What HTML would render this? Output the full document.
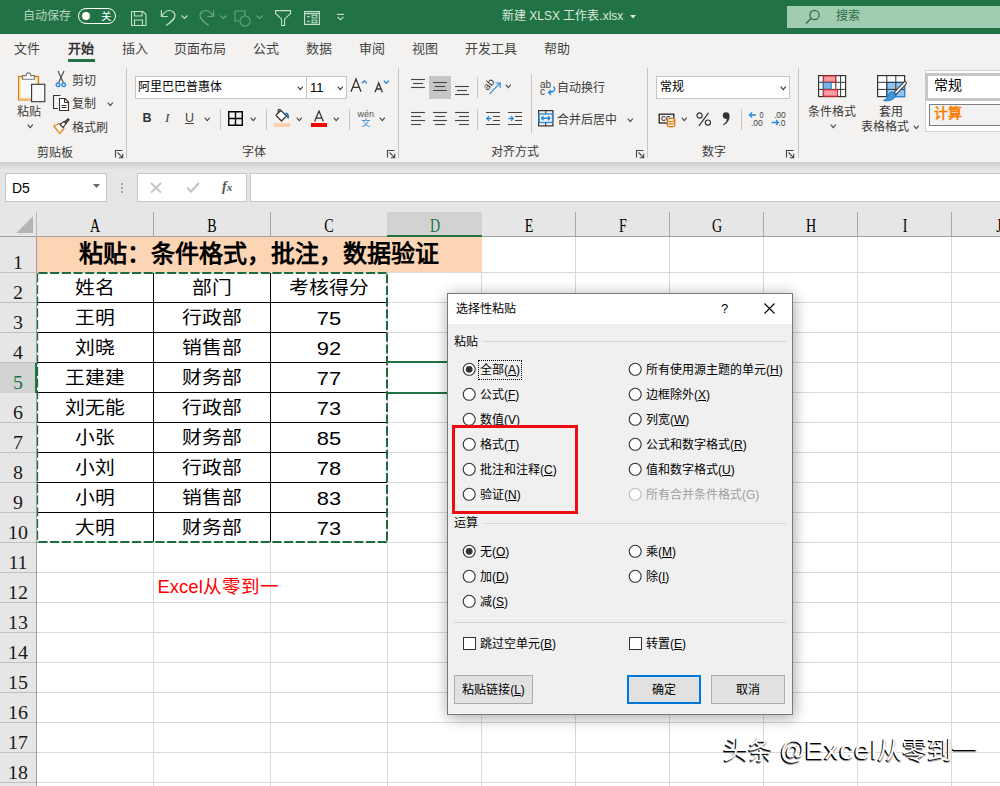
<!DOCTYPE html><html lang="zh-CN"><head><meta charset="utf-8"><style>
html,body{margin:0;padding:0}
body{width:1000px;height:786px;overflow:hidden;position:relative;background:#fff;font-family:"Liberation Sans",sans-serif}
div{box-sizing:border-box}
svg{overflow:visible}
</style></head><body>
<div style="position:absolute;left:153px;top:237px;width:1px;height:549px;background:#d9d9d9"></div>
<div style="position:absolute;left:270px;top:237px;width:1px;height:549px;background:#d9d9d9"></div>
<div style="position:absolute;left:387px;top:237px;width:1px;height:549px;background:#d9d9d9"></div>
<div style="position:absolute;left:481px;top:237px;width:1px;height:549px;background:#d9d9d9"></div>
<div style="position:absolute;left:575px;top:237px;width:1px;height:549px;background:#d9d9d9"></div>
<div style="position:absolute;left:669px;top:237px;width:1px;height:549px;background:#d9d9d9"></div>
<div style="position:absolute;left:763px;top:237px;width:1px;height:549px;background:#d9d9d9"></div>
<div style="position:absolute;left:857px;top:237px;width:1px;height:549px;background:#d9d9d9"></div>
<div style="position:absolute;left:951px;top:237px;width:1px;height:549px;background:#d9d9d9"></div>
<div style="position:absolute;left:1045px;top:237px;width:1px;height:549px;background:#d9d9d9"></div>
<div style="position:absolute;left:37px;top:272px;width:963px;height:1px;background:#d9d9d9"></div>
<div style="position:absolute;left:37px;top:302px;width:963px;height:1px;background:#d9d9d9"></div>
<div style="position:absolute;left:37px;top:332px;width:963px;height:1px;background:#d9d9d9"></div>
<div style="position:absolute;left:37px;top:362px;width:963px;height:1px;background:#d9d9d9"></div>
<div style="position:absolute;left:37px;top:392px;width:963px;height:1px;background:#d9d9d9"></div>
<div style="position:absolute;left:37px;top:422px;width:963px;height:1px;background:#d9d9d9"></div>
<div style="position:absolute;left:37px;top:452px;width:963px;height:1px;background:#d9d9d9"></div>
<div style="position:absolute;left:37px;top:482px;width:963px;height:1px;background:#d9d9d9"></div>
<div style="position:absolute;left:37px;top:512px;width:963px;height:1px;background:#d9d9d9"></div>
<div style="position:absolute;left:37px;top:542px;width:963px;height:1px;background:#d9d9d9"></div>
<div style="position:absolute;left:37px;top:572px;width:963px;height:1px;background:#d9d9d9"></div>
<div style="position:absolute;left:37px;top:602px;width:963px;height:1px;background:#d9d9d9"></div>
<div style="position:absolute;left:37px;top:632px;width:963px;height:1px;background:#d9d9d9"></div>
<div style="position:absolute;left:37px;top:662px;width:963px;height:1px;background:#d9d9d9"></div>
<div style="position:absolute;left:37px;top:692px;width:963px;height:1px;background:#d9d9d9"></div>
<div style="position:absolute;left:37px;top:722px;width:963px;height:1px;background:#d9d9d9"></div>
<div style="position:absolute;left:37px;top:752px;width:963px;height:1px;background:#d9d9d9"></div>
<div style="position:absolute;left:37px;top:782px;width:963px;height:1px;background:#d9d9d9"></div>
<div style="position:absolute;left:37px;top:237px;width:445px;height:35px;background:#fcd5b4"></div>
<div style="position:absolute;left:39.0px;top:239.0px;width:440px;height:30px;line-height:30px;text-align:center;font-size:24px;color:#000;white-space:nowrap;font-weight:bold">粘贴：条件格式，批注，数据验证</div>
<div style="position:absolute;left:37px;top:302px;width:350px;height:1px;background:#000"></div>
<div style="position:absolute;left:37px;top:332px;width:350px;height:1px;background:#000"></div>
<div style="position:absolute;left:37px;top:362px;width:350px;height:1px;background:#000"></div>
<div style="position:absolute;left:37px;top:392px;width:350px;height:1px;background:#000"></div>
<div style="position:absolute;left:37px;top:422px;width:350px;height:1px;background:#000"></div>
<div style="position:absolute;left:37px;top:452px;width:350px;height:1px;background:#000"></div>
<div style="position:absolute;left:37px;top:482px;width:350px;height:1px;background:#000"></div>
<div style="position:absolute;left:37px;top:512px;width:350px;height:1px;background:#000"></div>
<div style="position:absolute;left:153px;top:273px;width:1px;height:269px;background:#000"></div>
<div style="position:absolute;left:270px;top:273px;width:1px;height:269px;background:#000"></div>
<div style="position:absolute;left:37.0px;top:276.0px;width:116px;height:24px;line-height:24px;text-align:center;font-size:18px;color:#000;white-space:nowrap;transform:scaleX(1.1)">姓名</div>
<div style="position:absolute;left:154.0px;top:276.0px;width:116px;height:24px;line-height:24px;text-align:center;font-size:18px;color:#000;white-space:nowrap;transform:scaleX(1.1)">部门</div>
<div style="position:absolute;left:271.0px;top:276.0px;width:116px;height:24px;line-height:24px;text-align:center;font-size:18px;color:#000;white-space:nowrap;transform:scaleX(1.1)">考核得分</div>
<div style="position:absolute;left:37.0px;top:306.0px;width:116px;height:24px;line-height:24px;text-align:center;font-size:18px;color:#000;white-space:nowrap;transform:scaleX(1.1)">王明</div>
<div style="position:absolute;left:154.0px;top:306.0px;width:116px;height:24px;line-height:24px;text-align:center;font-size:18px;color:#000;white-space:nowrap;transform:scaleX(1.1)">行政部</div>
<div style="position:absolute;left:271.0px;top:305.5px;width:116px;height:25px;line-height:25px;text-align:center;font-size:19px;color:#000;white-space:nowrap;transform:scaleX(1.15)">75</div>
<div style="position:absolute;left:37.0px;top:336.0px;width:116px;height:24px;line-height:24px;text-align:center;font-size:18px;color:#000;white-space:nowrap;transform:scaleX(1.1)">刘晓</div>
<div style="position:absolute;left:154.0px;top:336.0px;width:116px;height:24px;line-height:24px;text-align:center;font-size:18px;color:#000;white-space:nowrap;transform:scaleX(1.1)">销售部</div>
<div style="position:absolute;left:271.0px;top:335.5px;width:116px;height:25px;line-height:25px;text-align:center;font-size:19px;color:#000;white-space:nowrap;transform:scaleX(1.15)">92</div>
<div style="position:absolute;left:37.0px;top:366.0px;width:116px;height:24px;line-height:24px;text-align:center;font-size:18px;color:#000;white-space:nowrap;transform:scaleX(1.1)">王建建</div>
<div style="position:absolute;left:154.0px;top:366.0px;width:116px;height:24px;line-height:24px;text-align:center;font-size:18px;color:#000;white-space:nowrap;transform:scaleX(1.1)">财务部</div>
<div style="position:absolute;left:271.0px;top:365.5px;width:116px;height:25px;line-height:25px;text-align:center;font-size:19px;color:#000;white-space:nowrap;transform:scaleX(1.15)">77</div>
<div style="position:absolute;left:37.0px;top:396.0px;width:116px;height:24px;line-height:24px;text-align:center;font-size:18px;color:#000;white-space:nowrap;transform:scaleX(1.1)">刘无能</div>
<div style="position:absolute;left:154.0px;top:396.0px;width:116px;height:24px;line-height:24px;text-align:center;font-size:18px;color:#000;white-space:nowrap;transform:scaleX(1.1)">行政部</div>
<div style="position:absolute;left:271.0px;top:395.5px;width:116px;height:25px;line-height:25px;text-align:center;font-size:19px;color:#000;white-space:nowrap;transform:scaleX(1.15)">73</div>
<div style="position:absolute;left:37.0px;top:426.0px;width:116px;height:24px;line-height:24px;text-align:center;font-size:18px;color:#000;white-space:nowrap;transform:scaleX(1.1)">小张</div>
<div style="position:absolute;left:154.0px;top:426.0px;width:116px;height:24px;line-height:24px;text-align:center;font-size:18px;color:#000;white-space:nowrap;transform:scaleX(1.1)">财务部</div>
<div style="position:absolute;left:271.0px;top:425.5px;width:116px;height:25px;line-height:25px;text-align:center;font-size:19px;color:#000;white-space:nowrap;transform:scaleX(1.15)">85</div>
<div style="position:absolute;left:37.0px;top:456.0px;width:116px;height:24px;line-height:24px;text-align:center;font-size:18px;color:#000;white-space:nowrap;transform:scaleX(1.1)">小刘</div>
<div style="position:absolute;left:154.0px;top:456.0px;width:116px;height:24px;line-height:24px;text-align:center;font-size:18px;color:#000;white-space:nowrap;transform:scaleX(1.1)">行政部</div>
<div style="position:absolute;left:271.0px;top:455.5px;width:116px;height:25px;line-height:25px;text-align:center;font-size:19px;color:#000;white-space:nowrap;transform:scaleX(1.15)">78</div>
<div style="position:absolute;left:37.0px;top:486.0px;width:116px;height:24px;line-height:24px;text-align:center;font-size:18px;color:#000;white-space:nowrap;transform:scaleX(1.1)">小明</div>
<div style="position:absolute;left:154.0px;top:486.0px;width:116px;height:24px;line-height:24px;text-align:center;font-size:18px;color:#000;white-space:nowrap;transform:scaleX(1.1)">销售部</div>
<div style="position:absolute;left:271.0px;top:485.5px;width:116px;height:25px;line-height:25px;text-align:center;font-size:19px;color:#000;white-space:nowrap;transform:scaleX(1.15)">83</div>
<div style="position:absolute;left:37.0px;top:516.0px;width:116px;height:24px;line-height:24px;text-align:center;font-size:18px;color:#000;white-space:nowrap;transform:scaleX(1.1)">大明</div>
<div style="position:absolute;left:154.0px;top:516.0px;width:116px;height:24px;line-height:24px;text-align:center;font-size:18px;color:#000;white-space:nowrap;transform:scaleX(1.1)">财务部</div>
<div style="position:absolute;left:271.0px;top:515.5px;width:116px;height:25px;line-height:25px;text-align:center;font-size:19px;color:#000;white-space:nowrap;transform:scaleX(1.15)">73</div>
<svg style="position:absolute;left:0px;top:0px;pointer-events:none" width="400" height="560" viewBox="0 0 400 560"><path d="M38.4 273 H386.5" stroke="#1e6b3f" stroke-width="2" stroke-dasharray="9.1 2.6" fill="none"/><path d="M38.4 542 H388" stroke="#1e6b3f" stroke-width="2" stroke-dasharray="9.1 2.6" fill="none"/><path d="M37.5 273.2 V543" stroke="#1e6b3f" stroke-width="1.3" stroke-dasharray="9.1 2.6" fill="none"/><path d="M387 274.2 V543" stroke="#1e6b3f" stroke-width="2" stroke-dasharray="9.1 2.6" fill="none"/></svg>
<div style="position:absolute;left:388px;top:361px;width:94px;height:2px;background:#217346"></div>
<div style="position:absolute;left:388px;top:392px;width:94px;height:2px;background:#217346"></div>
<div style="position:absolute;left:157.5px;top:574.75px;height:24.5px;line-height:24.5px;font-size:18.5px;color:#ff0000;white-space:nowrap;">Excel从零到一</div>
<div style="position:absolute;left:0px;top:212px;width:1000px;height:25px;background:#e6e6e6"></div>
<div style="position:absolute;left:0px;top:236px;width:1000px;height:1px;background:#9e9e9e"></div>
<svg style="position:absolute;left:0px;top:212px;" width="36" height="25" viewBox="0 0 36 25"><path d="M16.3 21 L33 4.3 L33 21 Z" fill="#b4b4b4"/></svg>
<div style="position:absolute;left:153px;top:212px;width:1px;height:24px;background:#a8a8a8"></div>
<div style="position:absolute;left:270px;top:212px;width:1px;height:24px;background:#a8a8a8"></div>
<div style="position:absolute;left:387px;top:212px;width:1px;height:24px;background:#a8a8a8"></div>
<div style="position:absolute;left:481px;top:212px;width:1px;height:24px;background:#a8a8a8"></div>
<div style="position:absolute;left:575px;top:212px;width:1px;height:24px;background:#a8a8a8"></div>
<div style="position:absolute;left:669px;top:212px;width:1px;height:24px;background:#a8a8a8"></div>
<div style="position:absolute;left:763px;top:212px;width:1px;height:24px;background:#a8a8a8"></div>
<div style="position:absolute;left:857px;top:212px;width:1px;height:24px;background:#a8a8a8"></div>
<div style="position:absolute;left:951px;top:212px;width:1px;height:24px;background:#a8a8a8"></div>
<div style="position:absolute;left:1045px;top:212px;width:1px;height:24px;background:#a8a8a8"></div>
<div style="position:absolute;left:36px;top:212px;width:1px;height:25px;background:#b8b8b8"></div>
<div style="position:absolute;left:387px;top:212px;width:95px;height:25px;background:#d2d2d2"></div>
<div style="position:absolute;left:387px;top:235px;width:95px;height:2px;background:#217346"></div>
<div style="position:absolute;left:75.0px;top:213.0px;width:40px;height:24px;line-height:24px;text-align:center;font-size:18px;color:#000;white-space:nowrap;font-family:'Liberation Serif',serif;transform:translateY(1px) scaleX(0.78)">A</div>
<div style="position:absolute;left:192.0px;top:213.0px;width:40px;height:24px;line-height:24px;text-align:center;font-size:18px;color:#000;white-space:nowrap;font-family:'Liberation Serif',serif;transform:translateY(1px) scaleX(0.78)">B</div>
<div style="position:absolute;left:309.0px;top:213.0px;width:40px;height:24px;line-height:24px;text-align:center;font-size:18px;color:#000;white-space:nowrap;font-family:'Liberation Serif',serif;transform:translateY(1px) scaleX(0.78)">C</div>
<div style="position:absolute;left:414.5px;top:213.0px;width:40px;height:24px;line-height:24px;text-align:center;font-size:18px;color:#217346;white-space:nowrap;font-family:'Liberation Serif',serif;transform:translateY(1px) scaleX(0.78)">D</div>
<div style="position:absolute;left:508.5px;top:213.0px;width:40px;height:24px;line-height:24px;text-align:center;font-size:18px;color:#000;white-space:nowrap;font-family:'Liberation Serif',serif;transform:translateY(1px) scaleX(0.78)">E</div>
<div style="position:absolute;left:602.5px;top:213.0px;width:40px;height:24px;line-height:24px;text-align:center;font-size:18px;color:#000;white-space:nowrap;font-family:'Liberation Serif',serif;transform:translateY(1px) scaleX(0.78)">F</div>
<div style="position:absolute;left:696.5px;top:213.0px;width:40px;height:24px;line-height:24px;text-align:center;font-size:18px;color:#000;white-space:nowrap;font-family:'Liberation Serif',serif;transform:translateY(1px) scaleX(0.78)">G</div>
<div style="position:absolute;left:790.5px;top:213.0px;width:40px;height:24px;line-height:24px;text-align:center;font-size:18px;color:#000;white-space:nowrap;font-family:'Liberation Serif',serif;transform:translateY(1px) scaleX(0.78)">H</div>
<div style="position:absolute;left:884.5px;top:213.0px;width:40px;height:24px;line-height:24px;text-align:center;font-size:18px;color:#000;white-space:nowrap;font-family:'Liberation Serif',serif;transform:translateY(1px) scaleX(0.78)">I</div>
<div style="position:absolute;left:978.5px;top:213.0px;width:40px;height:24px;line-height:24px;text-align:center;font-size:18px;color:#000;white-space:nowrap;font-family:'Liberation Serif',serif;transform:translateY(1px) scaleX(0.78)">J</div>
<div style="position:absolute;left:0px;top:237px;width:36px;height:549px;background:#e6e6e6"></div>
<div style="position:absolute;left:36px;top:237px;width:1px;height:549px;background:#a0a0a0"></div>
<div style="position:absolute;left:0px;top:272px;width:36px;height:1px;background:#c0c0c0"></div>
<div style="position:absolute;left:0px;top:302px;width:36px;height:1px;background:#c0c0c0"></div>
<div style="position:absolute;left:0px;top:332px;width:36px;height:1px;background:#c0c0c0"></div>
<div style="position:absolute;left:0px;top:362px;width:36px;height:1px;background:#c0c0c0"></div>
<div style="position:absolute;left:0px;top:392px;width:36px;height:1px;background:#c0c0c0"></div>
<div style="position:absolute;left:0px;top:422px;width:36px;height:1px;background:#c0c0c0"></div>
<div style="position:absolute;left:0px;top:452px;width:36px;height:1px;background:#c0c0c0"></div>
<div style="position:absolute;left:0px;top:482px;width:36px;height:1px;background:#c0c0c0"></div>
<div style="position:absolute;left:0px;top:512px;width:36px;height:1px;background:#c0c0c0"></div>
<div style="position:absolute;left:0px;top:542px;width:36px;height:1px;background:#c0c0c0"></div>
<div style="position:absolute;left:0px;top:572px;width:36px;height:1px;background:#c0c0c0"></div>
<div style="position:absolute;left:0px;top:602px;width:36px;height:1px;background:#c0c0c0"></div>
<div style="position:absolute;left:0px;top:632px;width:36px;height:1px;background:#c0c0c0"></div>
<div style="position:absolute;left:0px;top:662px;width:36px;height:1px;background:#c0c0c0"></div>
<div style="position:absolute;left:0px;top:692px;width:36px;height:1px;background:#c0c0c0"></div>
<div style="position:absolute;left:0px;top:722px;width:36px;height:1px;background:#c0c0c0"></div>
<div style="position:absolute;left:0px;top:752px;width:36px;height:1px;background:#c0c0c0"></div>
<div style="position:absolute;left:0px;top:782px;width:36px;height:1px;background:#c0c0c0"></div>
<div style="position:absolute;left:0px;top:363px;width:36px;height:30px;background:#d2d2d2"></div>
<div style="position:absolute;left:35px;top:363px;width:2px;height:30px;background:#217346"></div>
<div style="position:absolute;left:0;top:252px;width:36px;height:22px;line-height:22px;text-align:center;font-family:'Liberation Serif',serif;font-size:19px;transform:scaleX(1.05);color:#1a1a1a">1</div>
<div style="position:absolute;left:0;top:282px;width:36px;height:22px;line-height:22px;text-align:center;font-family:'Liberation Serif',serif;font-size:19px;transform:scaleX(1.05);color:#1a1a1a">2</div>
<div style="position:absolute;left:0;top:312px;width:36px;height:22px;line-height:22px;text-align:center;font-family:'Liberation Serif',serif;font-size:19px;transform:scaleX(1.05);color:#1a1a1a">3</div>
<div style="position:absolute;left:0;top:342px;width:36px;height:22px;line-height:22px;text-align:center;font-family:'Liberation Serif',serif;font-size:19px;transform:scaleX(1.05);color:#1a1a1a">4</div>
<div style="position:absolute;left:0;top:372px;width:36px;height:22px;line-height:22px;text-align:center;font-family:'Liberation Serif',serif;font-size:19px;transform:scaleX(1.05);color:#217346">5</div>
<div style="position:absolute;left:0;top:402px;width:36px;height:22px;line-height:22px;text-align:center;font-family:'Liberation Serif',serif;font-size:19px;transform:scaleX(1.05);color:#1a1a1a">6</div>
<div style="position:absolute;left:0;top:432px;width:36px;height:22px;line-height:22px;text-align:center;font-family:'Liberation Serif',serif;font-size:19px;transform:scaleX(1.05);color:#1a1a1a">7</div>
<div style="position:absolute;left:0;top:462px;width:36px;height:22px;line-height:22px;text-align:center;font-family:'Liberation Serif',serif;font-size:19px;transform:scaleX(1.05);color:#1a1a1a">8</div>
<div style="position:absolute;left:0;top:492px;width:36px;height:22px;line-height:22px;text-align:center;font-family:'Liberation Serif',serif;font-size:19px;transform:scaleX(1.05);color:#1a1a1a">9</div>
<div style="position:absolute;left:0;top:522px;width:36px;height:22px;line-height:22px;text-align:center;font-family:'Liberation Serif',serif;font-size:19px;transform:scaleX(1.05);color:#1a1a1a">10</div>
<div style="position:absolute;left:0;top:552px;width:36px;height:22px;line-height:22px;text-align:center;font-family:'Liberation Serif',serif;font-size:19px;transform:scaleX(1.05);color:#1a1a1a">11</div>
<div style="position:absolute;left:0;top:582px;width:36px;height:22px;line-height:22px;text-align:center;font-family:'Liberation Serif',serif;font-size:19px;transform:scaleX(1.05);color:#1a1a1a">12</div>
<div style="position:absolute;left:0;top:612px;width:36px;height:22px;line-height:22px;text-align:center;font-family:'Liberation Serif',serif;font-size:19px;transform:scaleX(1.05);color:#1a1a1a">13</div>
<div style="position:absolute;left:0;top:642px;width:36px;height:22px;line-height:22px;text-align:center;font-family:'Liberation Serif',serif;font-size:19px;transform:scaleX(1.05);color:#1a1a1a">14</div>
<div style="position:absolute;left:0;top:672px;width:36px;height:22px;line-height:22px;text-align:center;font-family:'Liberation Serif',serif;font-size:19px;transform:scaleX(1.05);color:#1a1a1a">15</div>
<div style="position:absolute;left:0;top:702px;width:36px;height:22px;line-height:22px;text-align:center;font-family:'Liberation Serif',serif;font-size:19px;transform:scaleX(1.05);color:#1a1a1a">16</div>
<div style="position:absolute;left:0;top:732px;width:36px;height:22px;line-height:22px;text-align:center;font-family:'Liberation Serif',serif;font-size:19px;transform:scaleX(1.05);color:#1a1a1a">17</div>
<div style="position:absolute;left:0;top:762px;width:36px;height:22px;line-height:22px;text-align:center;font-family:'Liberation Serif',serif;font-size:19px;transform:scaleX(1.05);color:#1a1a1a">18</div>
<div style="position:absolute;left:0px;top:162px;width:1000px;height:50px;background:#e6e6e6"></div>
<div style="position:absolute;left:0px;top:162px;width:1000px;height:8px;background:linear-gradient(#cdcdcd,#e6e6e6)"></div>
<div style="position:absolute;left:5px;top:173px;width:102px;height:29px;background:#fff;border:1px solid #c6c6c6"></div>
<div style="position:absolute;left:12px;top:177.5px;height:20px;line-height:20px;font-size:14px;color:#000;white-space:nowrap;">D5</div>
<svg style="position:absolute;left:93px;top:184px;" width="8" height="5" viewBox="0 0 8 5"><path d="M0 0 L7 0 L3.5 4 Z" fill="#666"/></svg>
<div style="position:absolute;left:121px;top:183px;width:2px;height:2px;background:#a6a6a6"></div>
<div style="position:absolute;left:121px;top:187px;width:2px;height:2px;background:#a6a6a6"></div>
<div style="position:absolute;left:121px;top:191px;width:2px;height:2px;background:#a6a6a6"></div>
<div style="position:absolute;left:137px;top:173px;width:110px;height:29px;background:#fff;border:1px solid #c6c6c6"></div>
<svg style="position:absolute;left:150px;top:182px;" width="12" height="11" viewBox="0 0 12 11"><path d="M1 1 L11 10.5 M11 1 L1 10.5" stroke="#c4c4c4" stroke-width="1.8" fill="none"/></svg>
<svg style="position:absolute;left:186px;top:182px;" width="14" height="11" viewBox="0 0 14 11"><path d="M1 5.5 L5 9.5 L13 1" stroke="#c4c4c4" stroke-width="2.2" fill="none"/></svg>
<div style="position:absolute;left:222px;top:177.0px;height:20px;line-height:20px;font-size:14px;color:#555;white-space:nowrap;font-family:'Liberation Serif',serif;font-weight:bold"><i>f</i><span style='font-size:11px'><i>x</i></span></div>
<div style="position:absolute;left:250px;top:173px;width:760px;height:29px;background:#fff;border:1px solid #c6c6c6"></div>
<div style="position:absolute;left:0px;top:0px;width:1000px;height:34px;background:#217346"></div>
<div style="position:absolute;left:22.5px;top:7.0px;height:18px;line-height:18px;font-size:12px;color:#b6d4c0;white-space:nowrap;">自动保存</div>
<div style="position:absolute;left:78px;top:8px;width:38px;height:16px;border:1.3px solid #fff;border-radius:8px"></div>
<div style="position:absolute;left:82px;top:12px;width:8px;height:8px;background:#fff;border-radius:50%"></div>
<div style="position:absolute;left:100.5px;top:7.75px;height:16.5px;line-height:16.5px;font-size:10.5px;color:#fff;white-space:nowrap;">关</div>
<svg style="position:absolute;left:130px;top:10px;" width="18" height="17" viewBox="0 0 18 17"><path d="M1.5 1.5 H13 L16 4.5 V15.5 H1.5 Z M4.5 1.5 V6 H12 V1.5 M4.5 15.5 V10 H12.5 V15.5" stroke="#c6e0ce" stroke-width="1.1" fill="none"/></svg>
<svg style="position:absolute;left:160px;top:10px;" width="17" height="17" viewBox="0 0 17 17"><path d="M1.4 0.3 V6.5 H7.7" stroke="#c6e0ce" stroke-width="1.2" fill="none"/><path d="M1.8 6.2 C4 3 6 0.5 9 0.5 C12.5 0.5 15 2.8 15 5.6 C15 8.5 13 10.5 6.3 15.5" stroke="#c6e0ce" stroke-width="1.2" fill="none"/></svg>
<svg style="position:absolute;left:181px;top:15px;" width="7" height="5" viewBox="0 0 7 5"><path d="M0.5 0.5 L3.5 3.5 L6.5 0.5" stroke="#c6e0ce" stroke-width="1.1" fill="none"/></svg>
<svg style="position:absolute;left:199px;top:10px;" width="17" height="17" viewBox="0 0 17 17"><path d="M14.6 0.3 V6.5 H8.3" stroke="#6fa386" stroke-width="1.2" fill="none"/><path d="M14.2 6.2 C12 3 10 0.5 7 0.5 C3.5 0.5 1 2.8 1 5.6 C1 8.5 3 10.5 9.7 15.5" stroke="#6fa386" stroke-width="1.2" fill="none"/></svg>
<svg style="position:absolute;left:220px;top:15px;" width="7" height="5" viewBox="0 0 7 5"><path d="M0.5 0.5 L3.5 3.5 L6.5 0.5" stroke="#6fa386" stroke-width="1.1" fill="none"/></svg>
<svg style="position:absolute;left:234px;top:10px;" width="18" height="17" viewBox="0 0 18 17"><path d="M1 1 H11 V6 M1 1 V11 H5" stroke="#6fa386" stroke-width="1.1" fill="none"/><circle cx="11" cy="11" r="5" stroke="#6fa386" stroke-width="1.1" fill="none"/></svg>
<svg style="position:absolute;left:256px;top:15px;" width="7" height="5" viewBox="0 0 7 5"><path d="M0.5 0.5 L3.5 3.5 L6.5 0.5" stroke="#6fa386" stroke-width="1.1" fill="none"/></svg>
<svg style="position:absolute;left:275px;top:10px;" width="17" height="17" viewBox="0 0 17 17"><path d="M0.6 0.6 H15.6 V3.4 L9.6 9.2 V15.5 H6.6 V9.2 L0.6 3.4 Z" stroke="#c6e0ce" stroke-width="1.1" fill="none"/></svg>
<svg style="position:absolute;left:304px;top:11px;" width="16" height="14" viewBox="0 0 16 14"><path d="M0.6 0.6 H15.4 V13.4 H0.6 Z M0.6 2.6 H15.4 M3.2 5.6 H5.6 M3.2 10.4 H5.6" stroke="#c6e0ce" stroke-width="1.1" fill="none"/><rect x="8.1" y="4.3" width="4.8" height="2.6" stroke="#c6e0ce" stroke-width="1" fill="none"/><rect x="8.1" y="9.1" width="4.8" height="2.6" stroke="#c6e0ce" stroke-width="1" fill="none"/></svg>
<svg style="position:absolute;left:336px;top:13px;" width="9" height="8" viewBox="0 0 9 8"><path d="M1 1.4 H8" stroke="#c6e0ce" stroke-width="1.1" fill="none"/><path d="M1.6 4 L4.5 6.8 L7.4 4" stroke="#c6e0ce" stroke-width="1.1" fill="none"/></svg>
<div style="position:absolute;left:502px;top:7.0px;height:18px;line-height:18px;font-size:12px;color:#dbe9df;white-space:nowrap;">新建 XLSX 工作表.xlsx</div>
<svg style="position:absolute;left:630px;top:15px;" width="7" height="4" viewBox="0 0 7 4"><path d="M0 0 H6 L3 3.5 Z" fill="#dbe9df"/></svg>
<div style="position:absolute;left:787px;top:6px;width:213px;height:22px;background:#a0ccb2"></div>
<svg style="position:absolute;left:805px;top:9px;" width="16" height="16" viewBox="0 0 16 16"><circle cx="9.5" cy="6" r="4.6" stroke="#2e6b48" stroke-width="1.2" fill="none"/><path d="M6.2 9.3 L1 14.5" stroke="#2e6b48" stroke-width="1.3"/></svg>
<div style="position:absolute;left:836px;top:7.0px;height:18px;line-height:18px;font-size:12px;color:#2e6b48;white-space:nowrap;">搜索</div>
<div style="position:absolute;left:0px;top:34px;width:1000px;height:128px;background:#f3f2f1"></div>
<div style="position:absolute;left:13.5px;top:38.5px;height:19px;line-height:19px;font-size:13px;color:#444;white-space:nowrap;">文件</div>
<div style="position:absolute;left:121.5px;top:38.5px;height:19px;line-height:19px;font-size:13px;color:#444;white-space:nowrap;">插入</div>
<div style="position:absolute;left:174px;top:38.5px;height:19px;line-height:19px;font-size:13px;color:#444;white-space:nowrap;">页面布局</div>
<div style="position:absolute;left:253px;top:38.5px;height:19px;line-height:19px;font-size:13px;color:#444;white-space:nowrap;">公式</div>
<div style="position:absolute;left:305.5px;top:38.5px;height:19px;line-height:19px;font-size:13px;color:#444;white-space:nowrap;">数据</div>
<div style="position:absolute;left:359px;top:38.5px;height:19px;line-height:19px;font-size:13px;color:#444;white-space:nowrap;">审阅</div>
<div style="position:absolute;left:412px;top:38.5px;height:19px;line-height:19px;font-size:13px;color:#444;white-space:nowrap;">视图</div>
<div style="position:absolute;left:465px;top:38.5px;height:19px;line-height:19px;font-size:13px;color:#444;white-space:nowrap;">开发工具</div>
<div style="position:absolute;left:544px;top:38.5px;height:19px;line-height:19px;font-size:13px;color:#444;white-space:nowrap;">帮助</div>
<div style="position:absolute;left:67.5px;top:38.5px;height:19px;line-height:19px;font-size:13px;color:#333;white-space:nowrap;font-weight:bold">开始</div>
<div style="position:absolute;left:68px;top:59px;width:27px;height:3px;background:#217346"></div>
<svg style="position:absolute;left:17px;top:71px;" width="30" height="32" viewBox="0 0 30 32"><rect x="1.6" y="5.4" width="20" height="23.5" fill="#fafafa" stroke="#d9730d" stroke-width="1.1"/><rect x="2.9" y="6.7" width="17.4" height="20.9" fill="#fafafa" stroke="#f7d58f" stroke-width="1.5"/><path d="M5.5 8.3 V4.6 H9.2 C9.6 0.9 13.4 0.9 13.8 4.6 H17.5 V8.3 Z" fill="#fff" stroke="#777" stroke-width="1.1"/><rect x="14.6" y="13.3" width="13.2" height="17.4" fill="#f8f8f8" stroke="#333" stroke-width="1.1"/></svg>
<div style="position:absolute;left:16.5px;top:102.5px;height:18px;line-height:18px;font-size:12px;color:#3b3a39;white-space:nowrap;">粘贴</div>
<svg style="position:absolute;left:27.25px;top:124px;" width="6.5" height="5" viewBox="0 0 6.5 5"><path d="M0.7 0.7 L3.25 3.7 L5.8 0.7" stroke="#444" stroke-width="1.05" fill="none"/></svg>
<svg style="position:absolute;left:55px;top:70px;" width="12" height="17" viewBox="0 0 12 17"><path d="M3 1 L8.3 12.5 M9 1 L3.7 12.5" stroke="#444" stroke-width="1.1"/><circle cx="3" cy="14.8" r="1.8" fill="none" stroke="#2b88d8" stroke-width="1.4"/><circle cx="8.7" cy="14.8" r="1.8" fill="none" stroke="#2b88d8" stroke-width="1.4"/></svg>
<div style="position:absolute;left:72px;top:71.5px;height:18px;line-height:18px;font-size:12px;color:#3b3a39;white-space:nowrap;">剪切</div>
<svg style="position:absolute;left:53px;top:95px;" width="17" height="17" viewBox="0 0 17 17"><path d="M7.5 0.5 H0.5 V13.5 H5" stroke="#333" stroke-width="1.1" fill="none"/><path d="M6.5 3.5 H12 L15.5 7 V15.5 H6.5 Z" stroke="#333" stroke-width="1.1" fill="#fff" stroke-linejoin="miter"/><path d="M11.5 3.5 V7.5 H15.5 M8.5 10.5 H13.5 M8.5 12.5 H13.5" stroke="#333" stroke-width="1" fill="none"/></svg>
<div style="position:absolute;left:72px;top:95.0px;height:18px;line-height:18px;font-size:12px;color:#3b3a39;white-space:nowrap;">复制</div>
<svg style="position:absolute;left:106.75px;top:101.5px;" width="6.5" height="5" viewBox="0 0 6.5 5"><path d="M0.7 0.7 L3.25 3.7 L5.8 0.7" stroke="#444" stroke-width="1.05" fill="none"/></svg>
<svg style="position:absolute;left:53px;top:118px;" width="17" height="17" viewBox="0 0 17 17"><path d="M0.8 8 L6.5 5.5 L11 10 L6.8 15.6 Z" fill="#fff" stroke="#d97b17" stroke-width="1.3" stroke-linejoin="round"/><path d="M4 12 L6.8 15.6 L8.8 13 Z" fill="#f7c873"/><path d="M7 6.5 L11 3.5 L13 5.5 L10 9.5 Z" fill="#fff" stroke="#333" stroke-width="1.1"/><path d="M11.5 4 L15 0.8 L16 1.8 L12.8 5.3" fill="none" stroke="#333" stroke-width="1.3"/></svg>
<div style="position:absolute;left:72px;top:119.0px;height:18px;line-height:18px;font-size:12px;color:#3b3a39;white-space:nowrap;">格式刷</div>
<div style="position:absolute;left:37px;top:143.5px;height:18px;line-height:18px;font-size:12px;color:#3b3a39;white-space:nowrap;">剪贴板</div>
<svg style="position:absolute;left:115px;top:150px;" width="9" height="8" viewBox="0 0 9 8"><path d="M0.5 7.5 V0.5 H7.5" stroke="#444" stroke-width="1.1" fill="none"/><path d="M2.5 2.5 L7.6 7.6 M7.7 3.8 V7.7 H3.8" stroke="#444" stroke-width="1.1" fill="none"/></svg>
<div style="position:absolute;left:126px;top:68px;width:1px;height:90px;background:#c8c6c4"></div>
<div style="position:absolute;left:135px;top:76px;width:172px;height:23px;background:#fff;border:1px solid #c8c6c4"></div>
<div style="position:absolute;left:138px;top:78.0px;height:18px;line-height:18px;font-size:12px;color:#000;white-space:nowrap;">阿里巴巴普惠体</div>
<svg style="position:absolute;left:296.75px;top:86px;" width="6.5" height="5" viewBox="0 0 6.5 5"><path d="M0.7 0.7 L3.25 3.7 L5.8 0.7" stroke="#333" stroke-width="1.05" fill="none"/></svg>
<div style="position:absolute;left:306px;top:76px;width:41px;height:23px;background:#fff;border:1px solid #c8c6c4"></div>
<div style="position:absolute;left:310px;top:78.0px;height:19px;line-height:19px;font-size:13px;color:#000;white-space:nowrap;">11</div>
<svg style="position:absolute;left:336.75px;top:86px;" width="6.5" height="5" viewBox="0 0 6.5 5"><path d="M0.7 0.7 L3.25 3.7 L5.8 0.7" stroke="#333" stroke-width="1.05" fill="none"/></svg>
<svg style="position:absolute;left:350px;top:78px;" width="12" height="15" viewBox="0 0 12 15"><path d="M1 13.8 L6 1 L11 13.8 M2.8 9.3 H9.2" stroke="#333" stroke-width="1.3" fill="none"/></svg>
<svg style="position:absolute;left:360.5px;top:79.5px;" width="7" height="4" viewBox="0 0 7 4"><path d="M0.8 3.3 L3.3 0.8 L5.8 3.3" stroke="#2b88d8" stroke-width="1.3" fill="none"/></svg>
<svg style="position:absolute;left:374px;top:81.5px;" width="10" height="11" viewBox="0 0 10 11"><path d="M1 10.3 L4.7 1 L8.4 10.3 M2.3 7 H7.1" stroke="#333" stroke-width="1.3" fill="none"/></svg>
<svg style="position:absolute;left:382.5px;top:79.5px;" width="7" height="4" viewBox="0 0 7 4"><path d="M0.8 0.8 L3.3 3.3 L5.8 0.8" stroke="#2b88d8" stroke-width="1.3" fill="none"/></svg>
<div style="position:absolute;left:142.5px;top:108.55px;height:18.5px;line-height:18.5px;font-size:12.5px;color:#333;white-space:nowrap;font-weight:bold">B</div>
<div style="position:absolute;left:165px;top:108.05px;height:19.5px;line-height:19.5px;font-size:13.5px;color:#444;white-space:nowrap;font-family:'Liberation Serif',serif;font-style:italic">I</div>
<div style="position:absolute;left:185px;top:108.55px;height:18.5px;line-height:18.5px;font-size:12.5px;color:#444;white-space:nowrap;text-decoration:underline">U</div>
<svg style="position:absolute;left:204.25px;top:117px;" width="6.5" height="5" viewBox="0 0 6.5 5"><path d="M0.7 0.7 L3.25 3.7 L5.8 0.7" stroke="#444" stroke-width="1.05" fill="none"/></svg>
<div style="position:absolute;left:220px;top:109px;width:1px;height:21px;background:#c8c6c4"></div>
<svg style="position:absolute;left:228px;top:110.5px;" width="16" height="16" viewBox="0 0 16 16"><path d="M0.7 0.7 H14.3 V14.3 H0.7 Z M7.5 0.7 V14.3 M0.7 7.5 H14.3" stroke="#000" stroke-width="1.4" fill="none"/></svg>
<svg style="position:absolute;left:249.75px;top:117px;" width="6.5" height="5" viewBox="0 0 6.5 5"><path d="M0.7 0.7 L3.25 3.7 L5.8 0.7" stroke="#444" stroke-width="1.05" fill="none"/></svg>
<div style="position:absolute;left:266px;top:109px;width:1px;height:21px;background:#c8c6c4"></div>
<svg style="position:absolute;left:273px;top:109px;" width="18" height="19" viewBox="0 0 18 19"><path d="M6.5 1.5 L4.5 4.5 M3.5 5.5 L8 1.5 L13.5 7 L8.5 12 L3 6.5 Z" stroke="#333" stroke-width="1.2" fill="#fff" stroke-linejoin="round"/><path d="M7.5 1 C6.5 -0.5 4.5 0.5 5 2.5" stroke="#333" stroke-width="1.1" fill="none"/><path d="M12.5 4.5 C14.5 4 15.5 6 15 9.5" stroke="#1f6fb2" stroke-width="1.8" fill="none"/><rect x="1" y="14" width="16" height="4" fill="#f8cfb0"/></svg>
<svg style="position:absolute;left:295.75px;top:117px;" width="6.5" height="5" viewBox="0 0 6.5 5"><path d="M0.7 0.7 L3.25 3.7 L5.8 0.7" stroke="#444" stroke-width="1.05" fill="none"/></svg>
<svg style="position:absolute;left:310px;top:110px;" width="18" height="18" viewBox="0 0 18 18"><path d="M4.6 11.5 L9 1 L13.4 11.5 M6 8 H12" stroke="#333" stroke-width="1.25" fill="none"/><rect x="1" y="13" width="16" height="4" fill="#f00"/></svg>
<svg style="position:absolute;left:332.75px;top:117px;" width="6.5" height="5" viewBox="0 0 6.5 5"><path d="M0.7 0.7 L3.25 3.7 L5.8 0.7" stroke="#444" stroke-width="1.05" fill="none"/></svg>
<div style="position:absolute;left:349px;top:109px;width:1px;height:21px;background:#c8c6c4"></div>
<div style="position:absolute;left:357.5px;top:107.0px;height:15px;line-height:15px;font-size:9px;color:#555;white-space:nowrap;">wén</div>
<div style="position:absolute;left:360.5px;top:115.25px;height:15.5px;line-height:15.5px;font-size:9.5px;color:#3a96dd;white-space:nowrap;">文</div>
<svg style="position:absolute;left:378.75px;top:117px;" width="6.5" height="5" viewBox="0 0 6.5 5"><path d="M0.7 0.7 L3.25 3.7 L5.8 0.7" stroke="#444" stroke-width="1.05" fill="none"/></svg>
<div style="position:absolute;left:242px;top:143.0px;height:18px;line-height:18px;font-size:12px;color:#3b3a39;white-space:nowrap;">字体</div>
<svg style="position:absolute;left:386.5px;top:150px;" width="9" height="8" viewBox="0 0 9 8"><path d="M0.5 7.5 V0.5 H7.5" stroke="#444" stroke-width="1.1" fill="none"/><path d="M2.5 2.5 L7.6 7.6 M7.7 3.8 V7.7 H3.8" stroke="#444" stroke-width="1.1" fill="none"/></svg>
<div style="position:absolute;left:398px;top:68px;width:1px;height:90px;background:#c8c6c4"></div>
<svg style="position:absolute;left:411px;top:79.2px;" width="14" height="13" viewBox="0 0 14 13"><path d="M0.0 0.5 H14.0" stroke="#444" stroke-width="1.1"/><path d="M2.0 4.5 H12.0" stroke="#444" stroke-width="1.1"/><path d="M0.0 8.5 H14.0" stroke="#444" stroke-width="1.1"/></svg>
<div style="position:absolute;left:429px;top:76px;width:22px;height:23px;background:#c8c6c4"></div>
<svg style="position:absolute;left:433px;top:82px;" width="14" height="13" viewBox="0 0 14 13"><path d="M0.0 0.5 H14.0" stroke="#444" stroke-width="1.1"/><path d="M2.0 4.5 H12.0" stroke="#444" stroke-width="1.1"/><path d="M0.0 8.5 H14.0" stroke="#444" stroke-width="1.1"/></svg>
<svg style="position:absolute;left:455px;top:86px;" width="14" height="13" viewBox="0 0 14 13"><path d="M0.0 0.5 H14.0" stroke="#444" stroke-width="1.1"/><path d="M2.0 4.5 H12.0" stroke="#444" stroke-width="1.1"/><path d="M0.0 8.5 H14.0" stroke="#444" stroke-width="1.1"/></svg>
<div style="position:absolute;left:477px;top:77px;width:1px;height:21px;background:#c8c6c4"></div>
<svg style="position:absolute;left:484px;top:78px;" width="18" height="17" viewBox="0 0 18 17"><text x="0" y="0" font-size="10.5" fill="#333" font-family="Liberation Sans" transform="translate(3.5 13) rotate(-50)">ab</text><path d="M5.5 15.8 L16 5.2 M11.5 5 H16.2 V9.7" stroke="#2b88d8" stroke-width="1.2" fill="none"/></svg>
<svg style="position:absolute;left:505.25px;top:84px;" width="6.5" height="5" viewBox="0 0 6.5 5"><path d="M0.7 0.7 L3.25 3.7 L5.8 0.7" stroke="#444" stroke-width="1.05" fill="none"/></svg>
<div style="position:absolute;left:530.5px;top:74px;width:1px;height:59px;background:#c8c6c4"></div>
<svg style="position:absolute;left:540px;top:79px;" width="16" height="16" viewBox="0 0 16 16"><text x="0" y="8.5" font-size="10" fill="#444" font-family="Liberation Sans">ab</text><text x="0" y="16" font-size="10" fill="#444" font-family="Liberation Sans">c</text><path d="M13.5 7.5 C16 10 14.5 13.5 9 13.5 M11 11 L8.5 13.5 L11 16" stroke="#2b88d8" stroke-width="1.3" fill="none"/></svg>
<div style="position:absolute;left:557px;top:79.0px;height:18px;line-height:18px;font-size:12px;color:#3b3a39;white-space:nowrap;">自动换行</div>
<svg style="position:absolute;left:411px;top:112px;" width="14" height="17" viewBox="0 0 14 17"><path d="M0 0.5 H14" stroke="#444" stroke-width="1.1"/><path d="M0 4.5 H10" stroke="#444" stroke-width="1.1"/><path d="M0 8.5 H14" stroke="#444" stroke-width="1.1"/><path d="M0 12.5 H10" stroke="#444" stroke-width="1.1"/></svg>
<svg style="position:absolute;left:433px;top:112px;" width="14" height="17" viewBox="0 0 14 17"><path d="M0.0 0.5 H14.0" stroke="#444" stroke-width="1.1"/><path d="M2.0 4.5 H12.0" stroke="#444" stroke-width="1.1"/><path d="M0.0 8.5 H14.0" stroke="#444" stroke-width="1.1"/><path d="M2.0 12.5 H12.0" stroke="#444" stroke-width="1.1"/></svg>
<svg style="position:absolute;left:455px;top:112px;" width="14" height="17" viewBox="0 0 14 17"><path d="M0 0.5 H14" stroke="#444" stroke-width="1.1"/><path d="M4 4.5 H14" stroke="#444" stroke-width="1.1"/><path d="M0 8.5 H14" stroke="#444" stroke-width="1.1"/><path d="M4 12.5 H14" stroke="#444" stroke-width="1.1"/></svg>
<div style="position:absolute;left:477px;top:109px;width:1px;height:21px;background:#c8c6c4"></div>
<svg style="position:absolute;left:486px;top:111px;" width="15" height="15" viewBox="0 0 15 15"><path d="M0 1.5 H14 M7 5.5 H14 M7 9.5 H14 M0 13.5 H14" stroke="#444" stroke-width="1.1"/><path d="M0.8 7.5 H5.5 M3 5.1 L0.8 7.5 L3 9.9" stroke="#2b88d8" stroke-width="1.3" fill="none"/></svg>
<svg style="position:absolute;left:508px;top:111px;" width="15" height="15" viewBox="0 0 15 15"><path d="M0 1.5 H14 M7 5.5 H14 M7 9.5 H14 M0 13.5 H14" stroke="#444" stroke-width="1.1"/><path d="M0.5 7.5 H5.2 M3 5.1 L5.2 7.5 L3 9.9" stroke="#2b88d8" stroke-width="1.3" fill="none"/></svg>
<svg style="position:absolute;left:538px;top:110px;" width="16" height="17" viewBox="0 0 16 17"><rect x="0.6" y="0.6" width="14.3" height="15.3" fill="none" stroke="#333" stroke-width="1.2"/><path d="M7.75 0.6 V4 M7.75 12.5 V15.9" stroke="#333" stroke-width="1.1"/><rect x="1" y="4" width="13.5" height="8.5" fill="none" stroke="#2b88d8" stroke-width="1.3"/><path d="M3.5 8.25 H12 M5.5 6.2 L3.5 8.25 L5.5 10.3 M10 6.2 L12 8.25 L10 10.3" stroke="#2b88d8" stroke-width="1.3" fill="none"/></svg>
<div style="position:absolute;left:557px;top:111.0px;height:18px;line-height:18px;font-size:12px;color:#3b3a39;white-space:nowrap;">合并后居中</div>
<svg style="position:absolute;left:626.75px;top:117.5px;" width="6.5" height="5" viewBox="0 0 6.5 5"><path d="M0.7 0.7 L3.25 3.7 L5.8 0.7" stroke="#444" stroke-width="1.05" fill="none"/></svg>
<div style="position:absolute;left:491px;top:142.5px;height:18px;line-height:18px;font-size:12px;color:#3b3a39;white-space:nowrap;">对齐方式</div>
<svg style="position:absolute;left:636px;top:150px;" width="9" height="8" viewBox="0 0 9 8"><path d="M0.5 7.5 V0.5 H7.5" stroke="#444" stroke-width="1.1" fill="none"/><path d="M2.5 2.5 L7.6 7.6 M7.7 3.8 V7.7 H3.8" stroke="#444" stroke-width="1.1" fill="none"/></svg>
<div style="position:absolute;left:647px;top:68px;width:1px;height:90px;background:#c8c6c4"></div>
<div style="position:absolute;left:656px;top:76px;width:134px;height:23px;background:#fff;border:1px solid #c8c6c4"></div>
<div style="position:absolute;left:659.5px;top:78.0px;height:18px;line-height:18px;font-size:12px;color:#000;white-space:nowrap;">常规</div>
<svg style="position:absolute;left:779.75px;top:86px;" width="6.5" height="5" viewBox="0 0 6.5 5"><path d="M0.7 0.7 L3.25 3.7 L5.8 0.7" stroke="#333" stroke-width="1.05" fill="none"/></svg>
<svg style="position:absolute;left:658px;top:113px;" width="18" height="15" viewBox="0 0 18 15"><rect x="1.2" y="1.2" width="14.6" height="8.8" fill="none" stroke="#333" stroke-width="1.4"/><text x="3" y="8.3" font-size="6.5" fill="#333" font-family="Liberation Sans" font-weight="bold">CC</text><path d="M9.3 7 V12.3 C9.3 14.2 16.7 14.2 16.7 12.3 V7 Z" fill="#fff" stroke="#d97b17" stroke-width="1.3"/><ellipse cx="13" cy="7" rx="3.7" ry="1.6" fill="#fff" stroke="#d97b17" stroke-width="1.3"/><path d="M9.3 9.7 C9.3 11.3 16.7 11.3 16.7 9.7" fill="none" stroke="#d97b17" stroke-width="1.1"/></svg>
<svg style="position:absolute;left:681.25px;top:117px;" width="6.5" height="5" viewBox="0 0 6.5 5"><path d="M0.7 0.7 L3.25 3.7 L5.8 0.7" stroke="#444" stroke-width="1.05" fill="none"/></svg>
<svg style="position:absolute;left:696px;top:112px;" width="16" height="15" viewBox="0 0 16 15"><circle cx="3.6" cy="3.5" r="2.6" fill="none" stroke="#333" stroke-width="1.2"/><circle cx="11.9" cy="10.6" r="2.6" fill="none" stroke="#333" stroke-width="1.2"/><path d="M12.5 0.8 L3 13.8" stroke="#333" stroke-width="1.2"/></svg>
<svg style="position:absolute;left:720px;top:110px;" width="12" height="17" viewBox="0 0 12 17"><circle cx="6.1" cy="5.6" r="3.3" fill="#333"/><path d="M9.3 5.2 C10.2 9.5 7.8 13.2 3.4 15.2 L3 14.4 C6 12.6 7.2 10.4 6.6 8.6 Z" fill="#333"/></svg>
<div style="position:absolute;left:741px;top:109px;width:1px;height:21px;background:#c8c6c4"></div>
<svg style="position:absolute;left:748px;top:110px;" width="18" height="17" viewBox="0 0 18 17"><path d="M1.5 5 H8 M4 2.5 L1.5 5 L4 7.5" stroke="#2b88d8" stroke-width="1.3" fill="none"/><text x="11.5" y="8" font-size="8.5" fill="#444" font-family="Liberation Sans" transform="scale(0.85 1)" transform-origin="11.5 8">0</text><text x="3" y="16" font-size="8.5" fill="#444" font-family="Liberation Sans">.00</text></svg>
<svg style="position:absolute;left:770px;top:110px;" width="18" height="17" viewBox="0 0 18 17"><text x="4" y="8" font-size="8.5" fill="#444" font-family="Liberation Sans">.00</text><path d="M1.5 12.5 H8.5 M6 10 L8.5 12.5 L6 15" stroke="#2b88d8" stroke-width="1.3" fill="none"/><text x="8.5" y="16" font-size="8.5" fill="#444" font-family="Liberation Sans">.0</text></svg>
<div style="position:absolute;left:702px;top:143.0px;height:18px;line-height:18px;font-size:12px;color:#3b3a39;white-space:nowrap;">数字</div>
<svg style="position:absolute;left:786px;top:150px;" width="9" height="8" viewBox="0 0 9 8"><path d="M0.5 7.5 V0.5 H7.5" stroke="#444" stroke-width="1.1" fill="none"/><path d="M2.5 2.5 L7.6 7.6 M7.7 3.8 V7.7 H3.8" stroke="#444" stroke-width="1.1" fill="none"/></svg>
<div style="position:absolute;left:797.5px;top:68px;width:1px;height:90px;background:#c8c6c4"></div>
<svg style="position:absolute;left:818px;top:75px;" width="29" height="23" viewBox="0 0 29 23"><rect x="0.6" y="0.6" width="27" height="21" fill="#fff" stroke="#333" stroke-width="1.2"/><path d="M0.6 7.3 H27.6 M0.6 14.4 H27.6 M5.2 0.6 V21.6 M17.8 0.6 V21.6 M22.6 0.6 V21.6" stroke="#333" stroke-width="1" fill="none"/><rect x="5.6" y="1" width="12" height="6" fill="#f6a0a5" stroke="#d9262c" stroke-width="1.1"/><rect x="5.6" y="7.6" width="7.6" height="6.5" fill="#7ab8ec" stroke="#1f6fb2" stroke-width="0.9"/><rect x="5.6" y="14.8" width="14" height="6.4" fill="#f6a0a5" stroke="#d9262c" stroke-width="1.1"/></svg>
<div style="position:absolute;left:807.5px;top:103.0px;height:18px;line-height:18px;font-size:12px;color:#3b3a39;white-space:nowrap;">条件格式</div>
<svg style="position:absolute;left:830.25px;top:124px;" width="6.5" height="5" viewBox="0 0 6.5 5"><path d="M0.7 0.7 L3.25 3.7 L5.8 0.7" stroke="#444" stroke-width="1.05" fill="none"/></svg>
<svg style="position:absolute;left:877px;top:75px;" width="32" height="28" viewBox="0 0 32 28"><rect x="0.6" y="0.6" width="27" height="21" fill="#fff" stroke="#333" stroke-width="1.2"/><rect x="9.8" y="7.4" width="17.8" height="14.2" fill="#8ec4f0" stroke="#2b88d8" stroke-width="1.2"/><path d="M0.6 7.3 H27.6 M0.6 14.4 H27.6 M9.8 0.6 V21.6 M18.8 0.6 V21.6" stroke="#333" stroke-width="1" fill="none"/><path d="M28.5 6.5 C30 7.5 29.5 8.5 28.8 9.3 L19 19.5 L17 17.5 L26.8 7.2 C27.3 6.7 28 6.2 28.5 6.5 Z" fill="#fff" stroke="#444" stroke-width="1.1"/><path d="M16.5 17.5 C14 16.5 11.5 18 11 20.5 C10.5 23 9 24.5 6.5 25.5 C11 26.5 16 25.5 18.5 21.5 C19 20.5 18.5 18.5 16.5 17.5 Z" fill="#3a96dd" stroke="#1f6fb2" stroke-width="0.9"/></svg>
<div style="position:absolute;left:878.5px;top:103.0px;height:18px;line-height:18px;font-size:12px;color:#3b3a39;white-space:nowrap;">套用</div>
<div style="position:absolute;left:861px;top:118.0px;height:18px;line-height:18px;font-size:12px;color:#3b3a39;white-space:nowrap;">表格格式</div>
<svg style="position:absolute;left:913.25px;top:124.5px;" width="6.5" height="5" viewBox="0 0 6.5 5"><path d="M0.7 0.7 L3.25 3.7 L5.8 0.7" stroke="#444" stroke-width="1.05" fill="none"/></svg>
<div style="position:absolute;left:925px;top:70px;width:80px;height:62px;background:#fff;border:1px solid #d2d0ce"></div>
<div style="position:absolute;left:925px;top:73px;width:80px;height:28px;background:#fff;border:3px solid #c8c6c4"></div>
<div style="position:absolute;left:934px;top:75.0px;height:20px;line-height:20px;font-size:14px;color:#000;white-space:nowrap;">常规</div>
<div style="position:absolute;left:929px;top:104px;width:80px;height:22px;background:#f2f2f2;border:1px solid #7f7f7f"></div>
<div style="position:absolute;left:934px;top:103.3px;height:20px;line-height:20px;font-size:14px;color:#fa7d00;white-space:nowrap;font-weight:bold">计算</div>
<div style="position:absolute;left:447px;top:293px;width:346px;height:422px;background:#f0f0f0;border:1px solid #7a7a7a;box-shadow:0 0 14px rgba(0,0,0,0.2),2px 5px 14px rgba(0,0,0,0.18)"></div>
<div style="position:absolute;left:448px;top:294px;width:344px;height:30px;background:#fff"></div>
<div style="position:absolute;left:456px;top:299.5px;height:18px;line-height:18px;font-size:12px;color:#000;white-space:nowrap;">选择性粘贴</div>
<div style="position:absolute;left:721px;top:298.5px;height:19px;line-height:19px;font-size:13px;color:#000;white-space:nowrap;">?</div>
<svg style="position:absolute;left:764px;top:303px;" width="11" height="11" viewBox="0 0 11 11"><path d="M0.5 0.5 L10.5 10.5 M10.5 0.5 L0.5 10.5" stroke="#000" stroke-width="1.1"/></svg>
<div style="position:absolute;left:454px;top:332.5px;height:18px;line-height:18px;font-size:12px;color:#000;white-space:nowrap;">粘贴</div>
<div style="position:absolute;left:483px;top:341px;width:303px;height:1px;background:#d5d5d5"></div>
<svg style="position:absolute;left:462px;top:362px;" width="14" height="14" viewBox="0 0 14 14"><circle cx="7.199999999999989" cy="7.300000000000011" r="6" fill="#fff" stroke="#333" stroke-width="1.1"/><circle cx="7.199999999999989" cy="7.300000000000011" r="3.4" fill="#333"/></svg>
<div style="position:absolute;left:480px;top:360.5px;height:18px;line-height:18px;font-size:12px;color:#000;white-space:nowrap;">全部(<u>A</u>)</div>
<svg style="position:absolute;left:628px;top:362px;" width="14" height="14" viewBox="0 0 14 14"><circle cx="7.2000000000000455" cy="7.300000000000011" r="6" fill="#fff" stroke="#333" stroke-width="1.1"/></svg>
<div style="position:absolute;left:646px;top:360.5px;height:18px;line-height:18px;font-size:12px;color:#000;white-space:nowrap;">所有使用源主题的单元(<u>H</u>)</div>
<svg style="position:absolute;left:462px;top:387px;" width="14" height="14" viewBox="0 0 14 14"><circle cx="7.199999999999989" cy="7.300000000000011" r="6" fill="#fff" stroke="#333" stroke-width="1.1"/></svg>
<div style="position:absolute;left:480px;top:385.5px;height:18px;line-height:18px;font-size:12px;color:#000;white-space:nowrap;">公式(<u>F</u>)</div>
<svg style="position:absolute;left:628px;top:387px;" width="14" height="14" viewBox="0 0 14 14"><circle cx="7.2000000000000455" cy="7.300000000000011" r="6" fill="#fff" stroke="#333" stroke-width="1.1"/></svg>
<div style="position:absolute;left:646px;top:385.5px;height:18px;line-height:18px;font-size:12px;color:#000;white-space:nowrap;">边框除外(<u>X</u>)</div>
<svg style="position:absolute;left:462px;top:412px;" width="14" height="14" viewBox="0 0 14 14"><circle cx="7.199999999999989" cy="7.300000000000011" r="6" fill="#fff" stroke="#333" stroke-width="1.1"/></svg>
<div style="position:absolute;left:480px;top:410.5px;height:18px;line-height:18px;font-size:12px;color:#000;white-space:nowrap;">数值(<u>V</u>)</div>
<svg style="position:absolute;left:628px;top:412px;" width="14" height="14" viewBox="0 0 14 14"><circle cx="7.2000000000000455" cy="7.300000000000011" r="6" fill="#fff" stroke="#333" stroke-width="1.1"/></svg>
<div style="position:absolute;left:646px;top:410.5px;height:18px;line-height:18px;font-size:12px;color:#000;white-space:nowrap;">列宽(<u>W</u>)</div>
<svg style="position:absolute;left:462px;top:437px;" width="14" height="14" viewBox="0 0 14 14"><circle cx="7.199999999999989" cy="7.300000000000011" r="6" fill="#fff" stroke="#333" stroke-width="1.1"/></svg>
<div style="position:absolute;left:480px;top:435.5px;height:18px;line-height:18px;font-size:12px;color:#000;white-space:nowrap;">格式(<u>T</u>)</div>
<svg style="position:absolute;left:628px;top:437px;" width="14" height="14" viewBox="0 0 14 14"><circle cx="7.2000000000000455" cy="7.300000000000011" r="6" fill="#fff" stroke="#333" stroke-width="1.1"/></svg>
<div style="position:absolute;left:646px;top:435.5px;height:18px;line-height:18px;font-size:12px;color:#000;white-space:nowrap;">公式和数字格式(<u>R</u>)</div>
<svg style="position:absolute;left:462px;top:462px;" width="14" height="14" viewBox="0 0 14 14"><circle cx="7.199999999999989" cy="7.300000000000011" r="6" fill="#fff" stroke="#333" stroke-width="1.1"/></svg>
<div style="position:absolute;left:480px;top:460.5px;height:18px;line-height:18px;font-size:12px;color:#000;white-space:nowrap;">批注和注释(<u>C</u>)</div>
<svg style="position:absolute;left:628px;top:462px;" width="14" height="14" viewBox="0 0 14 14"><circle cx="7.2000000000000455" cy="7.300000000000011" r="6" fill="#fff" stroke="#333" stroke-width="1.1"/></svg>
<div style="position:absolute;left:646px;top:460.5px;height:18px;line-height:18px;font-size:12px;color:#000;white-space:nowrap;">值和数字格式(<u>U</u>)</div>
<svg style="position:absolute;left:462px;top:487px;" width="14" height="14" viewBox="0 0 14 14"><circle cx="7.199999999999989" cy="7.300000000000011" r="6" fill="#fff" stroke="#333" stroke-width="1.1"/></svg>
<div style="position:absolute;left:480px;top:485.5px;height:18px;line-height:18px;font-size:12px;color:#000;white-space:nowrap;">验证(<u>N</u>)</div>
<svg style="position:absolute;left:628px;top:487px;" width="14" height="14" viewBox="0 0 14 14"><circle cx="7.2000000000000455" cy="7.300000000000011" r="6" fill="#fff" stroke="#bcbcbc" stroke-width="1.1"/></svg>
<div style="position:absolute;left:646px;top:485.5px;height:18px;line-height:18px;font-size:12px;color:#a0a0a0;white-space:nowrap;">所有合并条件格式(G)</div>
<div style="position:absolute;left:478px;top:360px;width:44px;height:20px;border:1px dotted #000"></div>
<div style="position:absolute;left:452px;top:425px;width:126px;height:89px;border:3px solid #ec0c14"></div>
<div style="position:absolute;left:454px;top:514.0px;height:18px;line-height:18px;font-size:12px;color:#000;white-space:nowrap;">运算</div>
<div style="position:absolute;left:483px;top:523px;width:303px;height:1px;background:#d5d5d5"></div>
<svg style="position:absolute;left:462px;top:544px;" width="14" height="14" viewBox="0 0 14 14"><circle cx="7.199999999999989" cy="7.2999999999999545" r="6" fill="#fff" stroke="#333" stroke-width="1.1"/><circle cx="7.199999999999989" cy="7.2999999999999545" r="3.4" fill="#333"/></svg>
<div style="position:absolute;left:480px;top:542.5px;height:18px;line-height:18px;font-size:12px;color:#000;white-space:nowrap;">无(<u>O</u>)</div>
<svg style="position:absolute;left:462px;top:569px;" width="14" height="14" viewBox="0 0 14 14"><circle cx="7.199999999999989" cy="7.2999999999999545" r="6" fill="#fff" stroke="#333" stroke-width="1.1"/></svg>
<div style="position:absolute;left:480px;top:567.5px;height:18px;line-height:18px;font-size:12px;color:#000;white-space:nowrap;">加(<u>D</u>)</div>
<svg style="position:absolute;left:462px;top:594px;" width="14" height="14" viewBox="0 0 14 14"><circle cx="7.199999999999989" cy="7.2999999999999545" r="6" fill="#fff" stroke="#333" stroke-width="1.1"/></svg>
<div style="position:absolute;left:480px;top:592.5px;height:18px;line-height:18px;font-size:12px;color:#000;white-space:nowrap;">减(<u>S</u>)</div>
<svg style="position:absolute;left:628px;top:544px;" width="14" height="14" viewBox="0 0 14 14"><circle cx="7.2000000000000455" cy="7.2999999999999545" r="6" fill="#fff" stroke="#333" stroke-width="1.1"/></svg>
<div style="position:absolute;left:646px;top:542.5px;height:18px;line-height:18px;font-size:12px;color:#000;white-space:nowrap;">乘(<u>M</u>)</div>
<svg style="position:absolute;left:628px;top:569px;" width="14" height="14" viewBox="0 0 14 14"><circle cx="7.2000000000000455" cy="7.2999999999999545" r="6" fill="#fff" stroke="#333" stroke-width="1.1"/></svg>
<div style="position:absolute;left:646px;top:567.5px;height:18px;line-height:18px;font-size:12px;color:#000;white-space:nowrap;">除(<u>I</u>)</div>
<div style="position:absolute;left:454px;top:622px;width:332px;height:1px;background:#d5d5d5"></div>
<div style="position:absolute;left:463px;top:637px;width:13px;height:13px;background:#fff;border:1px solid #333"></div>
<div style="position:absolute;left:480px;top:635.0px;height:18px;line-height:18px;font-size:12px;color:#000;white-space:nowrap;">跳过空单元(<u>B</u>)</div>
<div style="position:absolute;left:629px;top:637px;width:13px;height:13px;background:#fff;border:1px solid #333"></div>
<div style="position:absolute;left:646px;top:635.0px;height:18px;line-height:18px;font-size:12px;color:#000;white-space:nowrap;">转置(<u>E</u>)</div>
<div style="position:absolute;left:454px;top:675px;width:79px;height:29px;background:#e1e1e1;border:1px solid #adadad"></div>
<div style="position:absolute;left:454.0px;top:680.5px;width:79px;height:18px;line-height:18px;text-align:center;font-size:12px;color:#000;white-space:nowrap;">粘贴链接(<u>L</u>)</div>
<div style="position:absolute;left:627px;top:675px;width:74px;height:29px;background:#e1e1e1;border:2px solid #0078d7"></div>
<div style="position:absolute;left:627.0px;top:680.5px;width:74px;height:18px;line-height:18px;text-align:center;font-size:12px;color:#000;white-space:nowrap;">确定</div>
<div style="position:absolute;left:711px;top:675px;width:74px;height:29px;background:#e1e1e1;border:1px solid #adadad"></div>
<div style="position:absolute;left:711.0px;top:680.5px;width:74px;height:18px;line-height:18px;text-align:center;font-size:12px;color:#000;white-space:nowrap;">取消</div>
<div style="position:absolute;left:723px;top:734.5px;height:31px;line-height:31px;font-size:25px;color:#fff;white-space:nowrap;text-shadow:-1.3px 1.3px 0.6px #000,-0.6px 1.8px 1px rgba(0,0,0,0.5)">头条 @<span style='display:inline-block;transform:scaleX(1.12);transform-origin:0 50%;margin-right:7px;letter-spacing:0.8px'>Excel</span>从零到一</div>
</body></html>
